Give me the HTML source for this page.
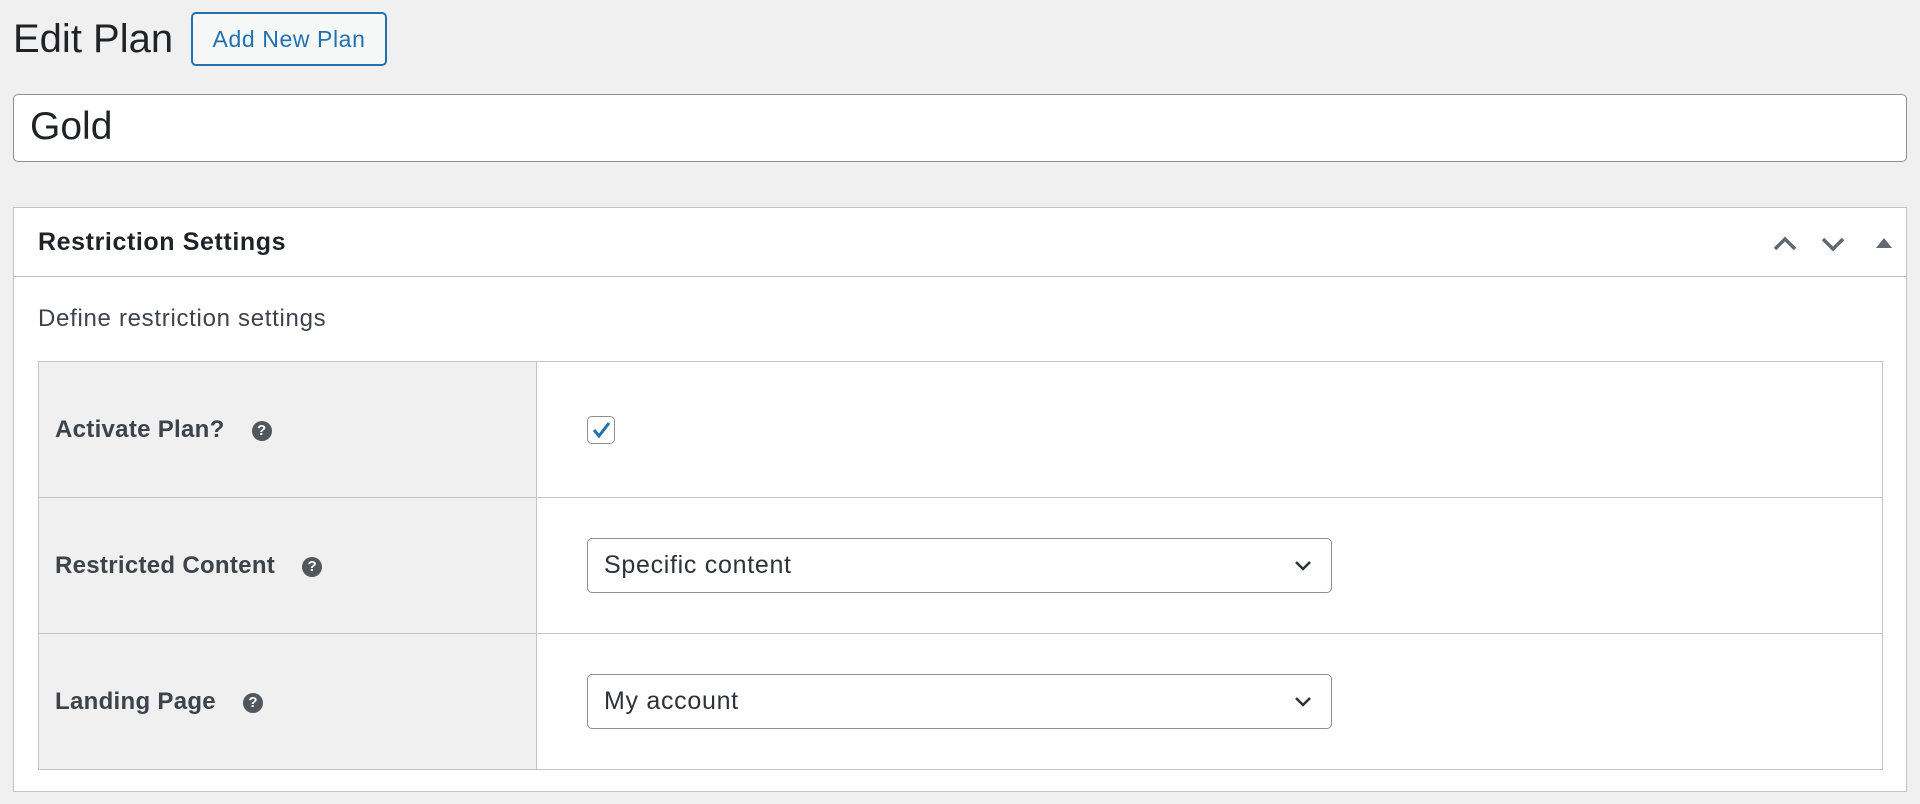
<!DOCTYPE html>
<html><head><meta charset="utf-8"><style>
*{box-sizing:border-box;margin:0;padding:0}
body{width:1920px;height:804px;background:#f0f0f1;font-family:"Liberation Sans",sans-serif;color:#1d2327;position:relative;overflow:hidden}
.abs{position:absolute}
h1{position:absolute;left:13px;top:14px;font-size:40px;font-weight:400;line-height:50px;color:#1d2327;letter-spacing:0}
.btn{left:191px;top:12px;width:196px;height:54px;border:2px solid #2271b1;border-radius:5px;background:#f6f7f7;color:#2271b1;font-size:23px;letter-spacing:0.6px;line-height:50px;text-align:center}
.title{left:13px;top:94px;width:1894px;height:68px;border:1.5px solid #8c8f94;border-radius:5px;background:#fff;font-size:39px;line-height:64px;padding-left:16px}
.box{left:13px;top:207px;width:1894px;height:585px;border:1.5px solid #c3c4c7;background:#fff}
.hdr{left:0;top:0;right:0;height:69px;border-bottom:1.5px solid #c3c4c7}
.hdr span{position:absolute;left:24px;top:20px;font-size:25px;letter-spacing:0.6px;font-weight:700}
.desc{left:24px;top:97px;font-size:24px;letter-spacing:0.7px;color:#3c434a}
table{position:absolute;left:24px;top:153px;width:1845px;border-collapse:collapse;border:1.5px solid #c3c4c7}
td{height:136px;border:1.5px solid #c3c4c7;vertical-align:middle}
td.l{width:498px;background:#f0f0f1;padding-left:16px;font-size:24px;letter-spacing:0.3px;font-weight:700;color:#3c434a}
.q{display:inline-block;margin-left:27px;width:20px;height:20px;border-radius:50%;background:#50575e;color:#fff;font-size:15px;line-height:20px;text-align:center;vertical-align:2px;font-weight:700;letter-spacing:0}
td.r{padding-left:50px}
.sel{width:745px;height:55px;border:1.5px solid #8c8f94;border-radius:5px;position:relative;font-size:25px;letter-spacing:0.7px;line-height:52px;padding-left:16px;color:#2c3338}
.sel svg{position:absolute;right:18px;top:17px}
.cb{width:28px;height:28px;border:1.5px solid #8c8f94;border-radius:5px;position:relative}
</style></head><body>
<h1>Edit Plan</h1>
<div class="abs btn">Add New Plan</div>
<div class="abs title">Gold</div>
<div class="abs box">
 <div class="abs hdr"><span>Restriction Settings</span>
  <svg class="abs" style="left:1758px;top:24px" width="120" height="24" viewBox="0 0 120 24">
   <path d="M3 17 L13 7 L23 17" fill="none" stroke="#646970" stroke-width="3.5"/>
   <path d="M51 7 L61 17 L71 7" fill="none" stroke="#646970" stroke-width="3.5"/>
   <path d="M104 16 L112 6 L120 16 Z" fill="#646970"/>
  </svg>
 </div>
 <div class="abs desc">Define restriction settings</div>
 <table>
  <tr><td class="l">Activate Plan?<span class="q">?</span></td><td class="r"><div class="cb"><svg class="abs" style="left:2px;top:2px" width="22" height="22" viewBox="0 0 22 22"><path d="M4 11 L9 17 L19 4" fill="none" stroke="#2271b1" stroke-width="3"/></svg></div></td></tr>
  <tr><td class="l">Restricted Content<span class="q">?</span></td><td class="r"><div class="sel">Specific content<svg width="20" height="20" viewBox="0 0 20 20"><path d="M3 6 L10 13 L17 6" fill="none" stroke="#2c3338" stroke-width="2.5"/></svg></div></td></tr>
  <tr><td class="l">Landing Page<span class="q">?</span></td><td class="r"><div class="sel">My account<svg width="20" height="20" viewBox="0 0 20 20"><path d="M3 6 L10 13 L17 6" fill="none" stroke="#2c3338" stroke-width="2.5"/></svg></div></td></tr>
 </table>
</div>
</body></html>
